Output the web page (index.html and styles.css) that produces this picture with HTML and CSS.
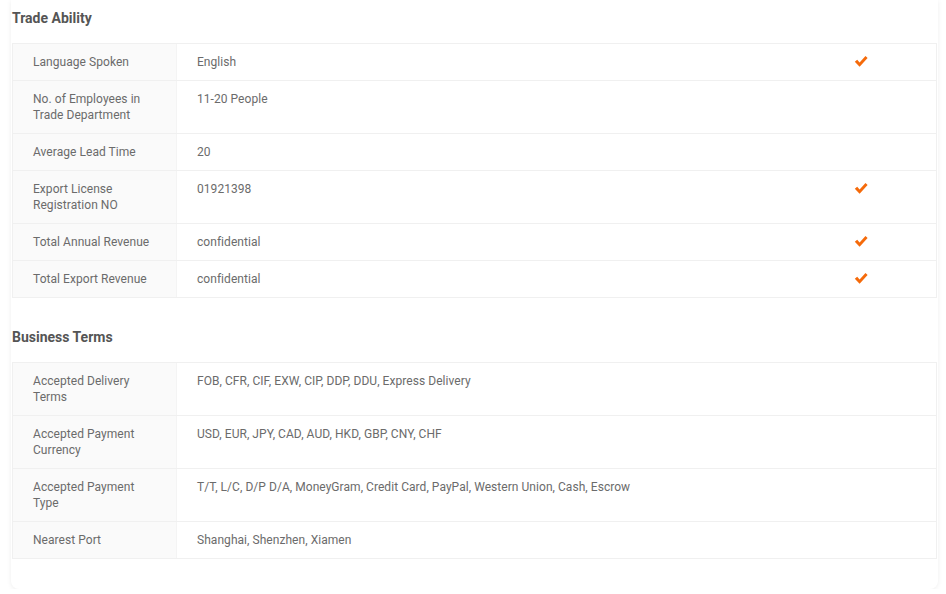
FILE: index.html
```html
<!DOCTYPE html>
<html>
<head>
<meta charset="utf-8">
<link rel="stylesheet" href="styles.css">
</head>
<body>
<div class="card">
  <section class="section">
    <h2 class="title">Trade Ability</h2>
    <div class="table">
      <div class="row"><div class="label">Language Spoken</div><div class="value">English</div><div class="check"><svg viewBox="0 0 14 12" width="14" height="13"><path d="M0.8 6.2 L3.2 4.2 L5.6 6.9 L11.5 0.6 L13.6 2.5 L5.6 11.2 Z" fill="#f56a0a"/></svg></div></div>
      <div class="row"><div class="label">No. of Employees in Trade Department</div><div class="value">11-20 People</div><div class="check"></div></div>
      <div class="row"><div class="label">Average Lead Time</div><div class="value">20</div><div class="check"></div></div>
      <div class="row"><div class="label">Export License Registration NO</div><div class="value">01921398</div><div class="check"><svg viewBox="0 0 14 12" width="14" height="13"><path d="M0.8 6.2 L3.2 4.2 L5.6 6.9 L11.5 0.6 L13.6 2.5 L5.6 11.2 Z" fill="#f56a0a"/></svg></div></div>
      <div class="row"><div class="label">Total Annual Revenue</div><div class="value">confidential</div><div class="check"><svg viewBox="0 0 14 12" width="14" height="13"><path d="M0.8 6.2 L3.2 4.2 L5.6 6.9 L11.5 0.6 L13.6 2.5 L5.6 11.2 Z" fill="#f56a0a"/></svg></div></div>
      <div class="row"><div class="label">Total Export Revenue</div><div class="value">confidential</div><div class="check"><svg viewBox="0 0 14 12" width="14" height="13"><path d="M0.8 6.2 L3.2 4.2 L5.6 6.9 L11.5 0.6 L13.6 2.5 L5.6 11.2 Z" fill="#f56a0a"/></svg></div></div>
    </div>
  </section>
  <section class="section">
    <h2 class="title">Business Terms</h2>
    <div class="table">
      <div class="row"><div class="label">Accepted Delivery Terms</div><div class="value">FOB, CFR, CIF, EXW, CIP, DDP, DDU, Express Delivery</div><div class="check"></div></div>
      <div class="row"><div class="label">Accepted Payment Currency</div><div class="value">USD, EUR, JPY, CAD, AUD, HKD, GBP, CNY, CHF</div><div class="check"></div></div>
      <div class="row"><div class="label">Accepted Payment Type</div><div class="value">T/T, L/C, D/P D/A, MoneyGram, Credit Card, PayPal, Western Union, Cash, Escrow</div><div class="check"></div></div>
      <div class="row"><div class="label">Nearest Port</div><div class="value">Shanghai, Shenzhen, Xiamen</div><div class="check"></div></div>
    </div>
  </section>
</div>
</body>
</html>
```

FILE: styles.css
```css
html, body {
  margin: 0;
  padding: 0;
  background: #ffffff;
}
body {
  font-family: Roboto, "Liberation Sans", sans-serif;
  color: #6b6b6b;
}
.card {
  width: 927px;
  margin-left: 11px;
  padding: 0 1px 30px 0;
  box-sizing: border-box;
  background: #fff;
  border-radius: 0 0 8px 8px;
  box-shadow: 0 1px 5px rgba(0, 0, 0, 0.07);
}
.section {
  padding-top: 8px;
}
.section + .section {
  margin-top: 21px;
}
.title {
  margin: 0 0 15px 1px;
  font-size: 14px;
  line-height: 20px;
  font-weight: 700;
  color: #555;
}
.table {
  margin-left: 1px;
  border: 1px solid #f0f0f0;
  border-bottom: 0;
}
.row {
  display: grid;
  grid-template-columns: 164px 1fr 82px;
  border-bottom: 1px solid #f0f0f0;
  font-size: 12px;
  line-height: 16px;
  letter-spacing: 0.05px;
}
.label {
  background: #fafafa;
  padding: 10px 20px 10px 20px;
  border-right: 1px solid #f4f4f4;
}
.value {
  padding: 10px 20px 10px 20px;
}
.check {
  padding: 11px 0 0 0;
}
.check svg {
  display: block;
}
```
